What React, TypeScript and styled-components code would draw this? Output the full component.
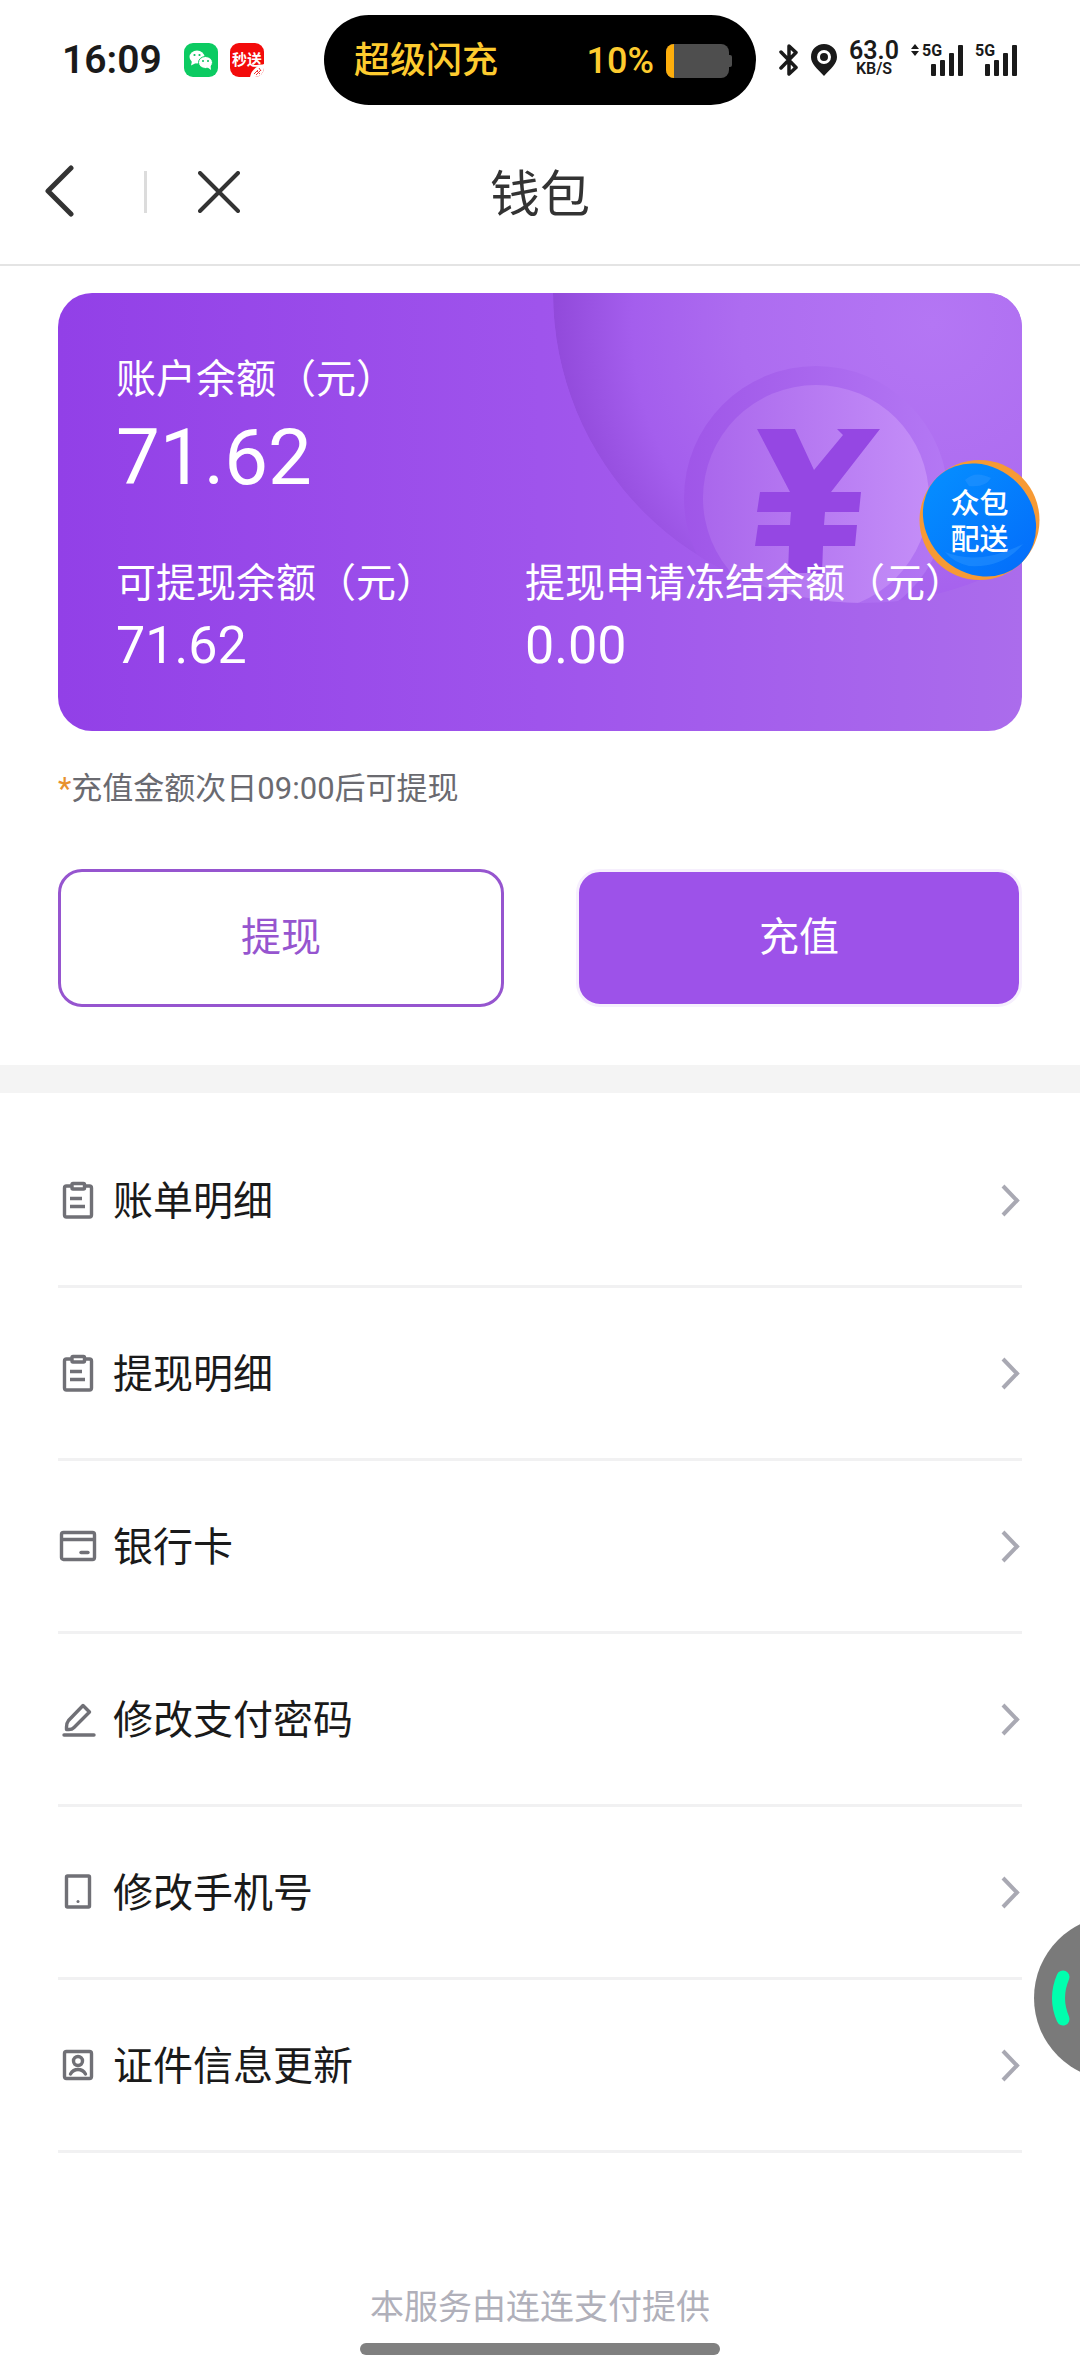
import React from 'react';
import styled, { createGlobalStyle } from 'styled-components';

const GlobalStyle = createGlobalStyle`
  *, *::before, *::after { box-sizing: border-box; }
  body {
    margin: 0;
    background: #fff;
    color: #1a1a1a;
    font-family: Roboto, "Noto Sans CJK SC", sans-serif;
  }
  button { font: inherit; color: inherit; border: 0; padding: 0; background: none; cursor: pointer; }
  svg { display: block; flex: none; }
`;

const Page = styled.div`
  position: relative;
  min-height: 100vh;
  display: flex;
  flex-direction: column;
  overflow: hidden;
`;

/* ---------- status bar ---------- */

const StatusBar = styled.header`
  display: grid;
  grid-template-columns: 1fr 432px 1fr;
  align-items: center;
  height: 120px;
`;

const StatusLeft = styled.div`
  display: flex;
  align-items: center;
  gap: 12px;
  padding-left: 62px;
`;

const Clock = styled.time`
  width: 110px;
  font-size: 39px;
  font-weight: 600;
  line-height: 40px;
`;

const AppTile = styled.span<{ $color: string }>`
  position: relative;
  display: flex;
  justify-content: center;
  width: 34px;
  height: 34px;
  border-radius: 9px;
  overflow: hidden;
  background: ${(p) => p.$color};
  color: #fff;
  font-size: 15px;
  font-weight: 700;
  line-height: 34px;
`;

const TileCorner = styled.svg`
  position: absolute;
  right: 0;
  bottom: 0;
`;

const ChargePill = styled.div`
  display: flex;
  align-items: center;
  justify-content: space-between;
  height: 90px;
  padding: 2px 24px 0 30px;
  border-radius: 45px;
  background: #000;
  color: #fdcb2f;
  font-size: 36px;
  font-weight: 500;
  line-height: 40px;
`;

const ChargeLevel = styled.div`
  display: flex;
  align-items: center;
  gap: 12px;
`;

const StatusRight = styled.div`
  display: flex;
  align-items: center;
  padding-left: 23px;
  gap: 12px;
`;

const Speed = styled.div`
  display: flex;
  flex-direction: column;
  align-items: center;
  font-size: 25px;
  font-weight: 600;
  line-height: 18px;
`;

const SpeedUnit = styled.small`
  font-size: 16px;
  font-weight: 600;
  line-height: 18px;
`;

const Signal = styled.div<{ $width: number }>`
  display: grid;
  width: ${(p) => p.$width}px;
  height: 34px;
  > * { grid-area: 1 / 1; }
`;

const Network = styled.div`
  display: flex;
  gap: 3px;
  font-size: 16px;
  font-weight: 700;
  line-height: 16px;
`;

const SignalBars = styled.svg`
  justify-self: end;
  align-self: end;
`;

/* ---------- navigation ---------- */

const NavBar = styled.nav`
  display: grid;
  grid-template-columns: 1fr auto 1fr;
  align-items: center;
  height: 146px;
  border-bottom: 2px solid #e4e4e4;
`;

const NavActions = styled.div`
  display: flex;
  align-items: center;
  padding-left: 44px;
`;

const NavDivider = styled.span`
  width: 3px;
  height: 42px;
  margin: 0 51px 0 68px;
  background: #dcdcdc;
`;

const NavTitle = styled.h1`
  margin: 0;
  padding-top: 6px;
  color: #333;
  font-size: 50px;
  font-weight: 400;
  line-height: 60px;
`;

/* ---------- balance ---------- */

const Balance = styled.section`
  padding: 27px 58px 58px;
`;

const BalanceCard = styled.div`
  position: relative;
  height: 438px;
  padding: 58px;
  border-radius: 34px;
  overflow: hidden;
  color: #fff;
  background: linear-gradient(90deg, #9240e7 0%, #9f54ec 50%, #ab6cec 100%);
`;

const CardArt = styled.svg`
  position: absolute;
  top: 0;
  right: 0;
`;

const CardBody = styled.div`
  position: relative;
`;

const Figure = styled.dl`
  margin: 0;
`;

const FigureLabel = styled.dt`
  font-size: 40px;
  line-height: 58px;
  white-space: nowrap;
`;

const FigureValue = styled.dd<{ $large?: boolean }>`
  margin: 0;
  font-size: ${(p) => (p.$large ? 78 : 52)}px;
  line-height: ${(p) => (p.$large ? 98 : 66)}px;
`;

const FigureRow = styled.div`
  display: grid;
  grid-template-columns: 409px 1fr;
  margin-top: 48px;
`;

const Note = styled.p`
  margin: 33px 0 0;
  color: #6a6a70;
  font-size: 31px;
  line-height: 50px;
`;

const Star = styled.span`
  color: #e8912f;
`;

const Actions = styled.div`
  display: grid;
  grid-template-columns: 1fr 1fr;
  gap: 72px;
  margin-top: 55px;
`;

const ActionButton = styled.button<{ $filled?: boolean }>`
  && {
    height: 138px;
    padding-bottom: 8px;
    border: 3px solid ${(p) => (p.$filled ? '#f6effd' : '#9655cf')};
    border-radius: 24px;
    background: ${(p) => (p.$filled ? '#9d52e9' : '#fff')};
    color: ${(p) => (p.$filled ? '#fff' : '#9655cf')};
    font-size: 40px;
  }
`;

const Band = styled.div`
  height: 28px;
  background: #f4f4f4;
`;

/* ---------- menu ---------- */

const Menu = styled.ul`
  margin: 0;
  padding: 22px 58px 0;
  list-style: none;
`;

const MenuItem = styled.li`
  height: 173px;
  border-bottom: 3px solid #f1f1f2;
`;

const MenuLink = styled.a`
  display: flex;
  align-items: center;
  gap: 15px;
  height: 100%;
  color: #1a1a1a;
  font-size: 40px;
  line-height: 56px;
  text-decoration: none;
`;

const MenuText = styled.span`
  flex: 1;
  padding-top: 3px;
`;

const Footer = styled.footer`
  display: flex;
  flex-direction: column;
  align-items: center;
  gap: 12px;
  margin-top: auto;
  padding: 40px 0 21px;
  color: #b0b0ba;
  font-size: 34px;
  line-height: 48px;
`;

const HomeBar = styled.span`
  width: 360px;
  height: 12px;
  border-radius: 6px;
  background: #808080;
`;

/* ---------- floating controls ---------- */

const DeliveryBadge = styled.button`
  position: absolute;
  top: 460px;
  right: 40px;
  width: 121px;
  height: 120px;
`;

const BadgeText = styled.span`
  position: absolute;
  inset: 0;
  display: flex;
  flex-direction: column;
  align-items: center;
  justify-content: center;
  padding-top: 4px;
  color: #fff;
  font-size: 29px;
  font-weight: 500;
  line-height: 36px;
`;

const EdgeHandle = styled.button`
  position: absolute;
  top: 1916px;
  right: 0;
  width: 46px;
  height: 164px;
  overflow: hidden;
`;

/* ---------- icons ---------- */

const iconProps = {
  width: 40,
  height: 40,
  viewBox: '0 0 40 40',
  fill: 'none',
  stroke: '#707076',
  strokeWidth: 3.4,
  'aria-hidden': true,
} as const;

const ClipboardIcon = () => (
  <svg {...iconProps}>
    <path d="M13 6H8.500Q6.500 6 6.500 8V35Q6.500 37 8.500 37H31.500Q33.500 37 33.500 35V8Q33.500 6 31.500 6H27" />
    <rect x="14" y="3.500" width="12.500" height="5.500" rx="1" />
    <path d="M12 18.500h12M12 26.500h15" />
  </svg>
);

const BankCardIcon = () => (
  <svg {...iconProps}>
    <rect x="3.500" y="6.500" width="33" height="27" rx="2" />
    <path d="M3.500 13.500h33" />
    <path d="M23 26.500h7" strokeLinecap="round" />
  </svg>
);

const EditIcon = () => (
  <svg {...iconProps}>
    <path d="M25 6.500L31.500 13L16 28.500Q14 30.500 11 30.500H8.500V28Q8.500 24 10.500 21.500Z" strokeLinejoin="round" />
    <path d="M6 36h30" strokeLinecap="round" />
  </svg>
);

const PhoneIcon = () => (
  <svg {...iconProps}>
    <rect x="8.500" y="4" width="23" height="31" rx="1" />
    <circle cx="20" cy="29.500" r="1.500" fill="#707076" stroke="none" />
  </svg>
);

const IdentityIcon = () => (
  <svg {...iconProps}>
    <rect x="6.500" y="6.500" width="27" height="27" rx="2" />
    <circle cx="20" cy="16" r="4.500" />
    <path d="M12.500 29Q15 24.500 20 24.500T27.500 29" strokeLinecap="round" />
  </svg>
);

const ArrowIcon = () => (
  <svg width="23" height="36" viewBox="0 0 23 36" fill="none" stroke="#a9a9b3" strokeWidth="4" aria-hidden>
    <path d="M4 4L18 18.500L4 33" />
  </svg>
);

const WechatGlyph = () => (
  <svg width="34" height="34" viewBox="0 0 34 34" aria-hidden>
    <path d="M8 18L7 22.500L12 20Z" fill="#fff" />
    <ellipse cx="13" cy="14" rx="7.500" ry="6.500" fill="#fff" />
    <circle cx="10.500" cy="12" r="1.100" fill="#07c160" />
    <circle cx="15.500" cy="12" r="1.100" fill="#07c160" />
    <ellipse cx="21.500" cy="19.500" rx="7" ry="6" fill="#fff" stroke="#0ccb62" />
    <path d="M23 24L27 27L26.500 22Z" fill="#fff" />
    <circle cx="19" cy="18" r="1" fill="#07c160" />
    <circle cx="24" cy="18" r="1" fill="#07c160" />
  </svg>
);

const BatteryGlyph = () => (
  <svg width="66" height="34" viewBox="0 0 66 34" aria-hidden>
    <rect width="63" height="34" rx="8" fill="#4e4e4e" />
    <path d="M62 11h2q2 0 2 2v8q0 2-2 2h-2z" fill="#4e4e4e" />
    <path d="M8 0v34a8 8 0 0 1-8-8V8a8 8 0 0 1 8-8z" fill="#fdae0c" />
  </svg>
);

const BluetoothGlyph = () => (
  <svg width="20" height="34" viewBox="0 0 20 34" fill="none" stroke="#1a1a1a" strokeWidth="3.500" strokeLinejoin="round" strokeLinecap="round" aria-hidden>
    <path d="M2 9L17 24.500L10 31V3L17 9.500L2 25" />
  </svg>
);

const LocationGlyph = () => (
  <svg width="26" height="34" viewBox="0 0 26 34" aria-hidden>
    <path d="M13 1C5.500 1 0 6.500 0 14c0 7 6 11.500 13 19c7-7.500 13-12 13-19C26 6.500 20.500 1 13 1z" fill="#1a1a1a" />
    <circle cx="13" cy="14" r="5.500" fill="#1a1a1a" stroke="#fff" strokeWidth="3" />
  </svg>
);

const Bars = () => (
  <SignalBars width="32" height="32" viewBox="0 0 32 32" fill="#1a1a1a" aria-hidden>
    <rect x="0" y="19" width="5" height="12" rx="1" />
    <rect x="9" y="15" width="5" height="16" rx="1" />
    <rect x="18" y="8" width="5" height="23" rx="1" />
    <rect x="27" y="0" width="5" height="31" rx="1" />
  </SignalBars>
);

const CoinArt = () => (
  <CardArt width="964" height="438" viewBox="0 0 964 438" aria-hidden>
    <defs>
      <clipPath id="discClip">
        <circle cx="805" cy="0" r="310" />
      </clipPath>
      <radialGradient id="discFill" gradientUnits="userSpaceOnUse" cx="875" cy="30" r="385">
        <stop offset="0" stopColor="#b476f4" />
        <stop offset="0.500" stopColor="#ad6cf0" />
        <stop offset="0.780" stopColor="#a45eed" />
        <stop offset="1" stopColor="#9048d9" />
      </radialGradient>
      <linearGradient id="ringFill" x1="0" y1="0" x2="1" y2="0">
        <stop offset="0" stopColor="#9f56e8" />
        <stop offset="1" stopColor="#b478f4" />
      </linearGradient>
      <linearGradient id="coinFill" x1="0" y1="0" x2="1" y2="0">
        <stop offset="0" stopColor="#aa67ec" />
        <stop offset="1" stopColor="#c48ef8" />
      </linearGradient>
    </defs>
    <g clipPath="url(#discClip)">
      <circle cx="805" cy="0" r="310" fill="url(#discFill)" />
      <circle cx="758" cy="205" r="132" fill="url(#ringFill)" />
      <circle cx="758" cy="205" r="113" fill="url(#coinFill)" />
    </g>
    <path
      d="M699 136H737L756 177L785 142L779 136H822L773 199H803L801 219H767L766 232H799L797 253H765L764 280H730L731 253H697L700 232H732L733 219H699L702 199H732Z"
      fill="#9547e3"
    />
  </CardArt>
);

const menu = [
  { label: '账单明细', Icon: ClipboardIcon },
  { label: '提现明细', Icon: ClipboardIcon },
  { label: '银行卡', Icon: BankCardIcon },
  { label: '修改支付密码', Icon: EditIcon },
  { label: '修改手机号', Icon: PhoneIcon },
  { label: '证件信息更新', Icon: IdentityIcon },
];

export default function App() {
  return (
    <Page>
      <GlobalStyle />
      <StatusBar>
        <StatusLeft>
          <Clock>16:09</Clock>
          <AppTile $color="#0ccb62">
            <WechatGlyph />
          </AppTile>
          <AppTile $color="#f30b0b">
            秒送
            <TileCorner width="14" height="13" viewBox="0 0 14 13" aria-hidden>
              <path d="M0 13Q2 3 14 0V13Z" fill="#fff" />
              <path d="M4 10l4-4M6 11l5-5M7 7l3 3M9 4l2 3" stroke="#e33" strokeWidth="1" fill="none" />
            </TileCorner>
          </AppTile>
        </StatusLeft>
        <ChargePill>
          <span>超级闪充</span>
          <ChargeLevel>
            <span>10%</span>
            <BatteryGlyph />
          </ChargeLevel>
        </ChargePill>
        <StatusRight>
          <BluetoothGlyph />
          <LocationGlyph />
          <Speed>
            <span>63.0</span>
            <SpeedUnit>KB/S</SpeedUnit>
          </Speed>
          <Signal $width={52}>
            <Network>
              <svg width="8" height="14" viewBox="0 0 8 14" fill="#1a1a1a" aria-hidden>
                <path d="M4 1L8 6H0ZM4 13L8 8H0Z" />
              </svg>
              5G
            </Network>
            <Bars />
          </Signal>
          <Signal $width={42}>
            <Network>5G</Network>
            <Bars />
          </Signal>
        </StatusRight>
      </StatusBar>

      <NavBar>
        <NavActions>
          <button type="button" aria-label="返回">
            <svg width="32" height="54" viewBox="0 0 32 54" fill="none" stroke="#333" strokeWidth="5" strokeLinecap="round" strokeLinejoin="round">
              <path d="M27 3L4 26L27 49" />
            </svg>
          </button>
          <NavDivider />
          <button type="button" aria-label="关闭">
            <svg width="42" height="42" viewBox="0 0 42 42" stroke="#333" strokeWidth="4" strokeLinecap="round">
              <path d="M2 2L40 40M40 2L2 40" />
            </svg>
          </button>
        </NavActions>
        <NavTitle>钱包</NavTitle>
      </NavBar>

      <main>
        <Balance>
          <BalanceCard>
            <CoinArt />
            <CardBody>
              <Figure>
                <FigureLabel>账户余额（元）</FigureLabel>
                <FigureValue $large>71.62</FigureValue>
              </Figure>
              <FigureRow>
                <Figure>
                  <FigureLabel>可提现余额（元）</FigureLabel>
                  <FigureValue>71.62</FigureValue>
                </Figure>
                <Figure>
                  <FigureLabel>提现申请冻结余额（元）</FigureLabel>
                  <FigureValue>0.00</FigureValue>
                </Figure>
              </FigureRow>
            </CardBody>
          </BalanceCard>
          <Note>
            <Star>*</Star>充值金额次日09:00后可提现
          </Note>
          <Actions>
            <ActionButton type="button">提现</ActionButton>
            <ActionButton type="button" $filled>
              充值
            </ActionButton>
          </Actions>
        </Balance>
        <Band />
        <Menu>
          {menu.map(({ label, Icon }) => (
            <MenuItem key={label}>
              <MenuLink href="#">
                <Icon />
                <MenuText>{label}</MenuText>
                <ArrowIcon />
              </MenuLink>
            </MenuItem>
          ))}
        </Menu>
      </main>

      <Footer>
        <span>本服务由连连支付提供</span>
        <HomeBar />
      </Footer>

      <DeliveryBadge type="button">
        <svg width="121" height="120" viewBox="0 0 121 120" aria-hidden>
          <defs>
            <linearGradient id="badgeFill" x1="0" y1="0" x2="1" y2="0">
              <stop offset="0" stopColor="#058cff" />
              <stop offset="1" stopColor="#0470fb" />
            </linearGradient>
          </defs>
          <circle cx="60.500" cy="60" r="60" fill="#f79a34" />
          <ellipse cx="60.500" cy="60" rx="60" ry="53" transform="rotate(45 60.500 60)" fill="url(#badgeFill)" />
          <path d="M46 20Q56 10 72 18Q66 28 50 26ZM26 92Q60 106 104 84Q84 108 50 106Q34 102 26 92Z" fill="#2f97ff" opacity="0.450" />
        </svg>
        <BadgeText>
          <span>众包</span>
          <span>配送</span>
        </BadgeText>
      </DeliveryBadge>

      <EdgeHandle type="button" aria-label="侧边栏">
        <svg width="164" height="164" viewBox="0 0 164 164" aria-hidden>
          <circle cx="82" cy="82" r="82" fill="#7a7a7a" />
          <path d="M29 61Q20 82 29 103" fill="none" stroke="#00ffae" strokeWidth="13" strokeLinecap="round" />
        </svg>
      </EdgeHandle>
    </Page>
  );
}
